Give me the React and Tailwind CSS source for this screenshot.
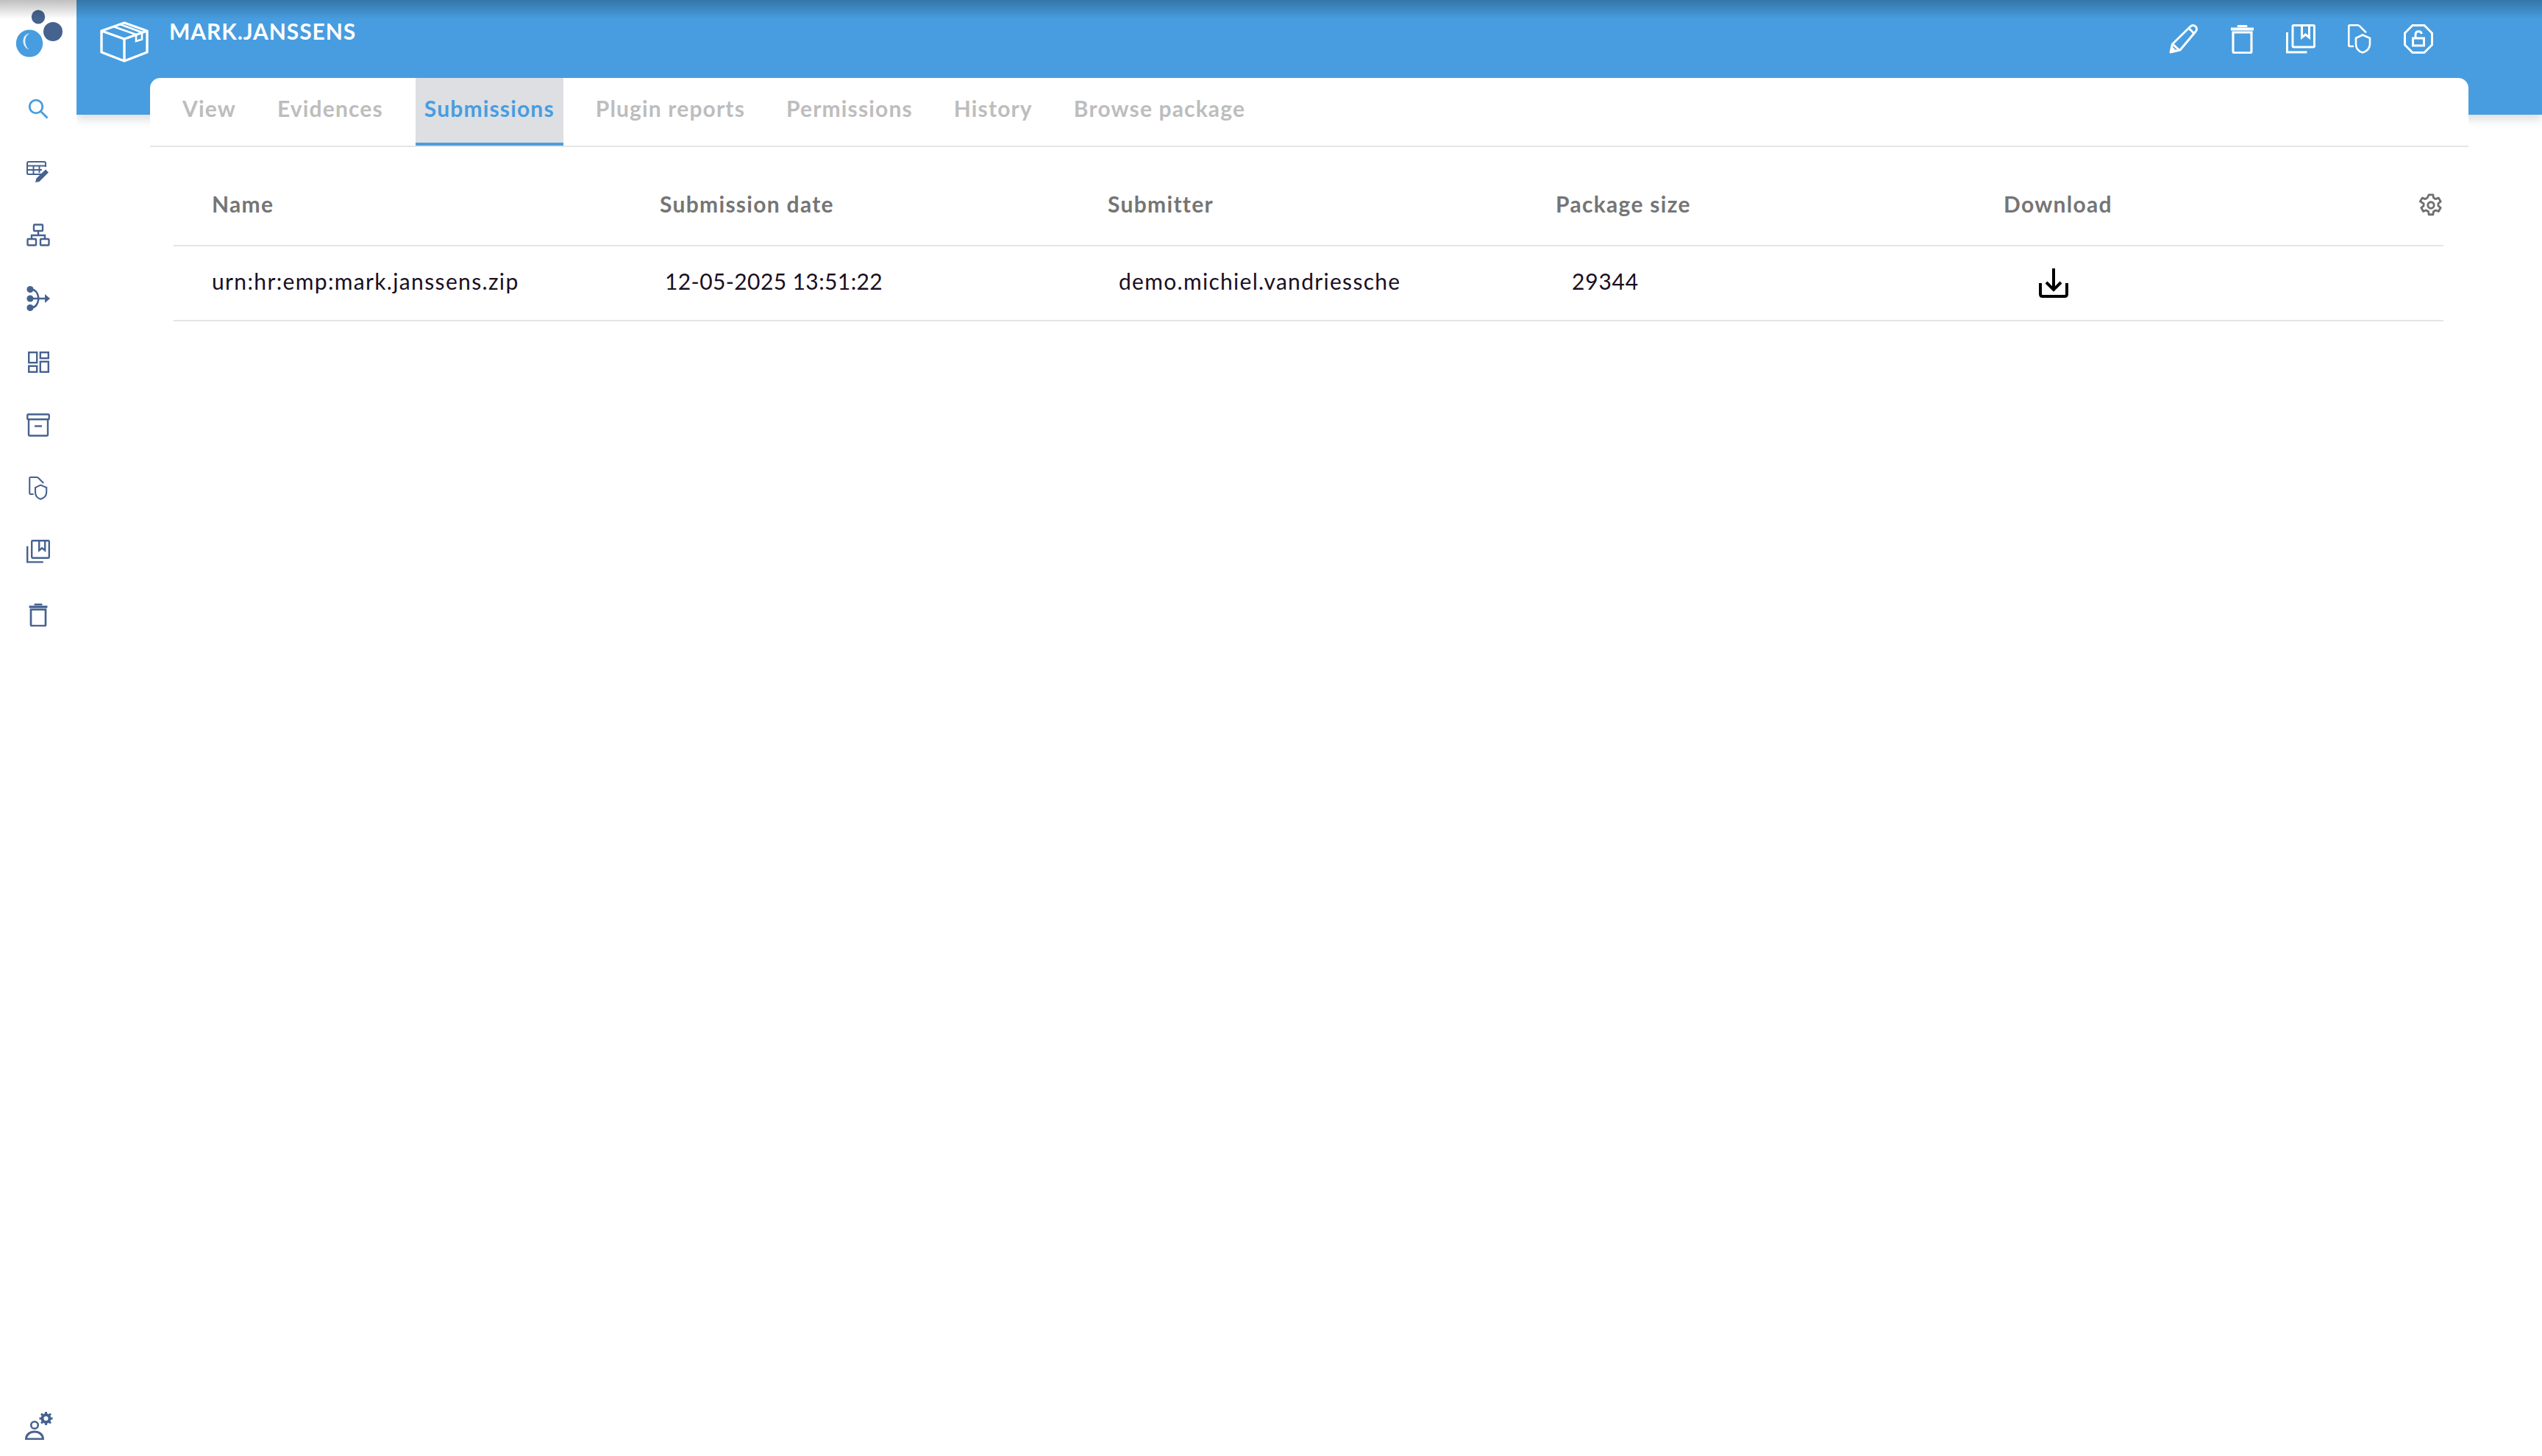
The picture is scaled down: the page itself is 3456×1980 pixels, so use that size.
import React from "react";

const NAVY = "#46628f";
const BLUE = "#479ddf";

function Svg({ w, h, vb, children, className = "", color = "currentColor", sw = 2 }) {
  return (
    <svg width={w} height={h} viewBox={vb} fill="none" stroke={color} strokeWidth={sw} className={className}>
      {children}
    </svg>
  );
}

const Logo = () => (
  <svg width="70" height="72" viewBox="0 0 70 72" className="block">
    <ellipse cx="31" cy="11" rx="9.2" ry="9.4" fill={NAVY} />
    <ellipse cx="51" cy="31" rx="13" ry="13" fill={NAVY} />
    <ellipse cx="19" cy="47" rx="18.2" ry="18.6" fill={BLUE} />
    <path d="M20 33.500c-4.500 1-7.500 6.500-6.500 13 .6 4 2.500 7 5 9-4.500-1.500-7.500-5.500-8-10.500-.5-6 3.500-12 9.500-11.500z" fill="#fff" opacity="0.85" />
  </svg>
);

const Search = () => (
  <Svg w={28} h={28} vb="0 0 28 28" color={BLUE} sw={2.8}>
    <circle cx="11" cy="11" r="8.800" />
    <path d="M17.500 17.500 26.500 26.500" />
  </Svg>
);

const TableEdit = () => (
  <Svg w={32} h={30} vb="0 0 32 30" color={NAVY} sw={2}>
    <path d="M21 18H2.500c-.8 0-1.500-.7-1.500-1.500V3c0-1 .7-2 2-2h21c1 0 2 1 2 2v5" />
    <path d="M1 6.500h25 M1 12h20 M9.500 6.500V18 M17.500 6.500V16" />
    <path d="M12 29l1.500-5.500L26 11.500l4 4L17.500 28z" fill={NAVY} stroke="none" />
  </Svg>
);

const Org = () => (
  <Svg w={32} h={32} vb="0 0 32 32" color={NAVY} sw={2.400}>
    <rect x="10" y="1.500" width="12" height="8.500" rx="1" />
    <rect x="1.500" y="21" width="11.500" height="8.500" rx="1" />
    <rect x="19" y="21" width="11.500" height="8.500" rx="1" />
    <path d="M16 10v6 M7 21v-5h18v5" />
  </Svg>
);

const Merge = () => (
  <Svg w={32} h={36} vb="0 0 32 36" color={NAVY} sw={2}>
    <circle cx="5" cy="5.500" r="4.600" fill={NAVY} stroke="none" />
    <circle cx="5" cy="18" r="4.600" fill={NAVY} stroke="none" />
    <circle cx="5" cy="30.500" r="4.600" fill={NAVY} stroke="none" />
    <path d="M6 5.500c7 0 9.500 5 10.500 12.500-1 7.500-3.500 12.500-10.500 12.500 M6 18h20" strokeWidth="2.400" />
    <path d="M25 12l7 6-7 6z" fill={NAVY} stroke="none" />
  </Svg>
);

const Dash = () => (
  <Svg w={29} h={29} vb="0 0 29 29" color={NAVY} sw={2.400}>
    <rect x="1.200" y="1.200" width="11" height="14" />
    <rect x="16.800" y="1.200" width="11" height="8" />
    <rect x="1.200" y="19.800" width="11" height="8" />
    <rect x="16.800" y="13.800" width="11" height="14" />
  </Svg>
);

const Archive = () => (
  <Svg w={32} h={32} vb="0 0 32 32" color={NAVY} sw={2.400}>
    <rect x="1.300" y="1.500" width="29.400" height="6.800" rx="1" />
    <path d="M3 8v21c0 1 .8 1.500 1.500 1.500h23c.8 0 1.500-.5 1.500-1.500V8" />
    <path d="M11 17.500h10" />
  </Svg>
);

const FileShield = ({ w = 26, h = 32, color = NAVY }) => (
  <Svg w={w} h={h} vb="0 0 32 40" color={color} sw={2.600}>
    <path d="M8 30H2.800C1.800 30 1.300 29.300 1.300 28.500V2.800C1.300 1.800 1.800 1.300 2.800 1.300H15" />
    <path d="M15 1.300l10 10" />
    <path d="M20 14.500l10 4.300V27c0 6-4.500 9.800-10 11.500-5.500-1.700-9-5.500-9-11.500v-8.200z" />
  </Svg>
);

const Stack = ({ w = 32, h = 32, color = NAVY, sw = 2.400 }) => (
  <Svg w={w} h={h} vb="0 0 40 40" color={color} sw={sw * 1.25}>
    <path d="M1.500 11v27h27" />
    <rect x="9" y="1.500" width="29.500" height="29.500" rx="1.500" />
    <path d="M21.500 2v16l5-4 5 4V2" />
  </Svg>
);

const Trash = ({ w = 26, h = 32, color = NAVY, sw = 2.800 }) => (
  <Svg w={w} h={h} vb="0 0 31 40" color={color} sw={sw * 1.2}>
    <path d="M0 6.500h31" strokeWidth="4" />
    <path d="M10 2.500h11" strokeWidth="3" strokeLinecap="round" />
    <path d="M3 11h25v26c0 1-.8 1.800-1.800 1.800H4.800C3.800 38.800 3 38 3 37z" />
  </Svg>
);

const Pencil = () => (
  <Svg w={40} h={40} vb="0 0 40 40" color="#fff" sw={3}>
    <path d="M2 38 4.500 27 29 3c2-2 5-2 7 0s2 5 0 7L15 35z" strokeLinejoin="round" />
    <path d="M27 5.500l7.500 7.500 M5 27l9 8.500" />
    <path d="M2 38l2-8 6 6z" fill="#fff" stroke="none" />
  </Svg>
);

const LockOct = () => (
  <Svg w={40} h={40} vb="0 0 40 40" color="#fff" sw={3}>
    <path d="M12 1.500h16L38.500 12v16L28 38.500H12L1.500 28V12z" />
    <rect x="12.500" y="19" width="15" height="10" strokeWidth="3" />
    <path d="M16 19v-5c0-5 7-6 8.500-1" />
  </Svg>
);

const Gear = () => (
  <svg width="34" height="34" viewBox="0 0 24 24" fill="none" stroke="#6f6f6f" strokeWidth="2" strokeLinejoin="round">
    <path d="M10 2h4l.5 3 2 1.100 2.800-1.100 2 3.500-2.300 1.900v2.200l2.300 1.900-2 3.500-2.800-1.100-2 1.100-.5 3h-4l-.5-3-2-1.100-2.800 1.100-2-3.500 2.300-1.900v-2.200L1.700 8.500l2-3.500 2.800 1.100 2-1.100z" />
    <circle cx="12" cy="12" r="3" />
  </svg>
);

const Download = () => (
  <Svg w={40} h={40} vb="0 0 40 40" color="#000" sw={4}>
    <path d="M20 0v30" />
    <path d="M10 19l10 10 10-10" />
    <path d="M2 20v15c0 2 1 3 3 3h30c2 0 3-1 3-3V20" />
  </Svg>
);

const Box = () => (
  <Svg w={66} h={56} vb="0 0 66 56" color="#fff" sw={3.400}>
    <path d="M2 13 33 2l31 11v29L33 54 2 42z" strokeLinejoin="round" />
    <path d="M2 13l31 11 31-11 M33 24v30" />
    <path d="M18 7l31 11v9l8-2.500V15L27 4" strokeWidth="2.600" />
  </Svg>
);

const UserGear = () => (
  <svg width="40" height="40" viewBox="0 0 40 40" fill="none" stroke={NAVY}>
    <circle cx="13" cy="20" r="4.800" strokeWidth="2.600" />
    <path d="M1.500 39c0-6 5-10 11.500-10s11.500 4 11.500 10z" strokeWidth="3" />
    <circle cx="28.500" cy="11" r="5" strokeWidth="4" />
    <path d="M28.500 2v3.500 M28.500 16.500V20 M19.500 11H23 M34 11h3.500 M22 4.500l3 3 M32 14.500l3 3 M35 4.500l-3 3 M25 14.500l-3 3" strokeWidth="3" />
  </svg>
);

const Sans = "font-['Lato','Liberation_Sans',sans-serif]";

const tabs = ["View", "Evidences", "Submissions", "Plugin reports", "Permissions", "History", "Browse package"];

const navIcons = [Search, TableEdit, Org, Merge, Dash, Archive, FileShield, Stack, Trash];

export default function App() {
  return (
    <div className={`relative flex h-screen bg-white overflow-hidden ${Sans}`}>
      <aside className="relative z-10 flex w-[104px] shrink-0 flex-col items-center bg-white pb-[22px]">
        <div className="mt-[12px] ml-[8px] h-[72px] w-[70px]">
          <Logo />
        </div>
        <nav className="mt-[21px] flex flex-col items-center">
          {navIcons.map((I, i) => (
            <div key={i} className="flex h-[86px] w-[40px] items-center justify-center">
              <I />
            </div>
          ))}
        </nav>
        <div className="mt-auto ml-[4px]">
          <UserGear />
        </div>
      </aside>

      <main className="min-w-0 flex-1">
        <header className="flex h-[156px] items-start justify-between bg-[#479ddf] pl-[32px] pr-[148px] shadow-[0_6px_12px_rgba(0,0,0,0.14)]">
          <div className="flex items-start">
            <div className="mt-[29px]">
              <Box />
            </div>
            <h1 className="ml-[28px] mt-[24px] text-[30px] leading-[36px] font-bold tracking-[0.9px] text-white">MARK.JANSSENS</h1>
          </div>
          <div className="mt-[33px] flex items-center gap-[44px] [&>svg]:block">
            <Pencil />
            <Trash w={31} h={40} color="#fff" sw={2.600} />
            <Stack w={40} h={40} color="#fff" sw={2.400} />
            <FileShield w={32} h={40} color="#fff" />
            <LockOct />
          </div>
        </header>

        <section className="relative z-[1] mx-[100px] -mt-[50px] rounded-t-[14px] bg-white">
          <div className="flex h-[94px] items-start gap-[32px] border-b-2 border-[#e5e5e5] pl-[32px]">
            {tabs.map((t) =>
              t === "Submissions" ? (
                <div key={t} className="h-[92px] border-b-4 border-[#479ddf] bg-[#dddfe3] px-3 pt-[23px] text-[30px] leading-[36px] font-bold tracking-[1.15px] text-[#479ddf]">
                  {t}
                </div>
              ) : (
                <div key={t} className="h-[92px] px-3 pt-[23px] text-[30px] leading-[36px] font-bold tracking-[1.15px] text-[#bdbdbd]">
                  {t}
                </div>
              )
            )}
          </div>

          <div className="mx-[32px] w-[3086px]">
            <div className="grid h-[135px] grid-cols-[repeat(5,609px)_1fr] items-center border-b-2 border-[#e5e5e5] pt-[20px] text-[30px] leading-[36px] font-bold tracking-[1.3px] text-[#757575]">
              <div className="pl-[52px]">Name</div>
              <div className="pl-[52px]">Submission date</div>
              <div className="pl-[52px]">Submitter</div>
              <div className="pl-[52px]">Package size</div>
              <div className="pl-[52px]">Download</div>
              <div className="flex justify-end pt-[4px]">
                <Gear />
              </div>
            </div>
            <div className="grid h-[102px] grid-cols-[repeat(5,609px)_1fr] items-center border-b-2 border-[#e5e5e5] text-[30px] leading-[36px] font-normal text-[#1a0f1f]">
              <div className="pb-[7px] pl-[52px] tracking-[1.35px]">urn:hr:emp:mark.janssens.zip</div>
              <div className="pb-[7px] pl-[59px] tracking-[0.4px]">12-05-2025 13:51:22</div>
              <div className="pb-[7px] pl-[67px] tracking-[1.3px]">demo.michiel.vandriessche</div>
              <div className="pb-[7px] pl-[74px] tracking-[0.8px]">29344</div>
              <div className="pl-[100px]">
                <Download />
              </div>
              <div />
            </div>
          </div>
        </section>
      </main>

      <div className="pointer-events-none absolute inset-x-0 top-0 z-20 h-[26px] bg-gradient-to-b from-black/25 to-transparent" />
    </div>
  );
}
